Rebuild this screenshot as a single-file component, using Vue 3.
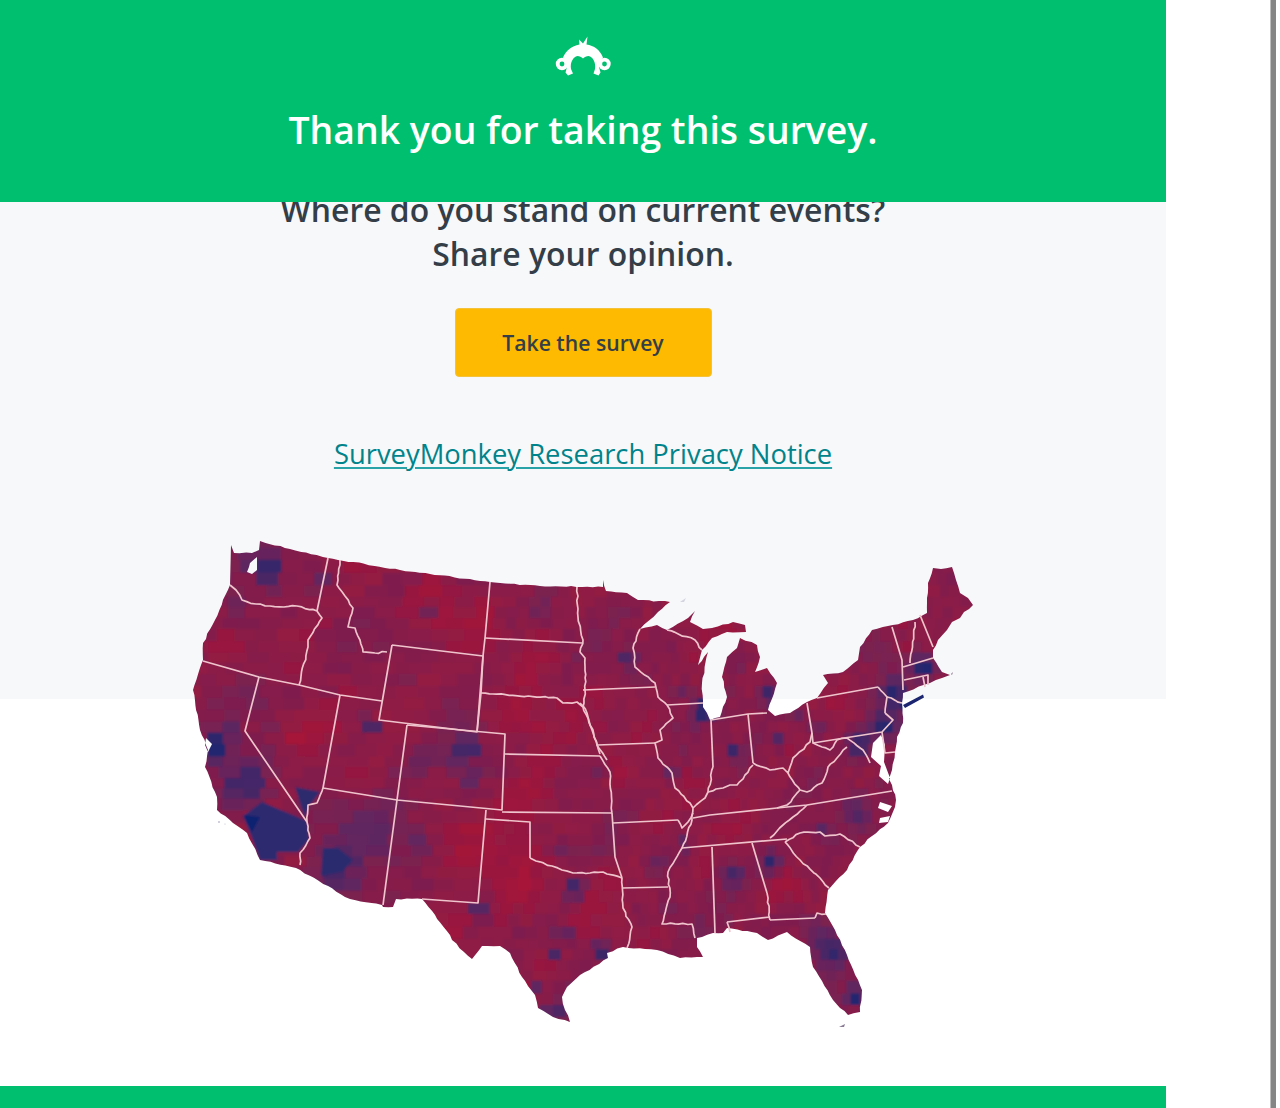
<template>
  <div class="page">
    <div class="column">
      <header class="banner">
        <svg class="logo" viewBox="550 32 66 46" width="66" height="46">
          <path
            d="M579 39.500L583 43.500L587.500 36.500L586.500 44.500C594 45.500 600 50 603 57.500L600 61C600 63 599.500 65 599 67L600.500 72.500L598.500 75.500L593.500 73.500L595 69C596 62.500 593 57 588.500 56C586.500 56 584.500 57 583 58.500C581.500 57 579.500 56 577.500 56C573 57 570 62.500 571 69L573 73.500L568 75.500L565.500 72.500L567 67C566.500 65 566 63 566 61L563 57.500C566 50.500 571.500 46 579.500 44.500Z"
            fill="#fff"
          />
          <circle cx="562" cy="64" r="4.300" fill="none" stroke="#fff" stroke-width="3.800" />
          <circle cx="604.500" cy="64" r="4.300" fill="none" stroke="#fff" stroke-width="3.800" />
        </svg>
        <h1 class="thanks">Thank you for taking this survey.</h1>
      </header>

      <section class="pitch">
        <h2 class="question">Where do you stand on current events?<br />Share your opinion.</h2>
        <button class="cta" type="button">Take the survey</button>
        <a class="privacy" href="#">SurveyMonkey Research Privacy Notice</a>
      </section>

      <section class="map-spacer"></section>
      <footer class="bottom-bar"></footer>

      <!-- map straddles the grey and white sections -->
      <svg class="us-map" viewBox="180 530 810 510" width="810" height="510">
        <defs>
          <clipPath id="usClip">
            <path :d="landPath" clip-rule="evenodd" />
          </clipPath>
          <filter id="soften" x="-2%" y="-2%" width="104%" height="104%">
            <feGaussianBlur stdDeviation="1.1" />
          </filter>
        </defs>
        <g clip-path="url(#usClip)">
          <g filter="url(#soften)">
            <rect
              v-for="c in cells"
              :key="c.id"
              :x="c.x"
              :y="c.y"
              :width="c.w"
              :height="c.h"
              :fill="c.fill"
            />
            <polygon points="262,802 307,821 309,840 298,852 277,852 277,860 260,860 250,833 243,816" fill="#2e2a70" />
            <polygon points="295,787 320,792 308,807 305,818" fill="#2f2a6e" />
            <polygon points="323,848 338,848 353,860 342,872 321,876" fill="#2c2b6e" />
            <polygon points="243,815 260,817 252,832" fill="#0b2070" />
            <polygon points="898,702 928,690 928,700 903,712" fill="#1b2570" />
          </g>
        </g>
        <g class="borders">
          <polyline v-for="(b, i) in borderLines" :key="i" :points="b" />
        </g>
        <g fill="#a9aac0" opacity="0.8">
          <circle cx="219" cy="822" r="0.900" />
          <circle cx="225" cy="824" r="0.600" />
          <path d="M839 1027L845 1024L844 1027Z" fill="#6a5a78" />
          <path d="M680 602L686 598L684 602Z" fill="#c9cbd6" />
          <path d="M951 674L953 672L952 675Z" fill="#6a4a68" />
        </g>
      </svg>
    </div>
    <div class="edge"></div>
  </div>
</template>

<script setup>
// outline traced by hand, coordinates are page pixels
const outline = `231,545 234,553 252,553 259,550 260,541 290,549 328,558 400,570 490,582 540,586 603,587 603,580 606,591 627,593 638,600
670,602 658,612 640,629 657,625 667,630 688,618 695,611 690,622 703,629 712,628 733,622 745,625 746,632 727,632 712,638 702,650
698,665 708,652 702,683 703,707 710,720 720,717 727,697 722,677 727,657 737,648 740,638 757,645 760,657 755,672 767,668 777,683
768,710 775,716 790,713 807,702 817,698 828,683 823,675 843,672 858,660 860,647 872,630 913,620 927,613 928,583 933,568 941,569 952,567
956,580 960,593 968,598 973,605 964,612 960,618 952,622 947,630 938,640 933,650 933,658 942,672 950,675 942,678 930,683 903,693 902,703 903,723 897,737 895,752 892,770
889,779 892,785 896,800 895,807 888,823 872,836 860,847 847,870 828,890 825,913 835,930 847,955 862,990 860,1012 848,1015 833,1000 813,967 810,947 787,932
768,940 757,933 727,928 723,933 713,933 697,938 697,947 703,957 680,958 657,950 623,947 607,953 608,958 580,975 567,987 562,997
565,1010 570,1022 553,1017 538,1008 535,995 522,977 510,953 500,946 482,946 472,959 452,940 450,935 422,899 396,899 393,907 383,907
382,905 350,899 296,868 260,860 247,833 233,823 217,810 217,797 205,767 208,750 200,730 193,690 203,660 203,643 215,620 230,585`

const holes = [
  '250,563 257,557 257,570 252,574 247,572 249,567',
  '881,735 873,743 871,757 881,766 879,776 888,784 890,778 884,762 885,745',
  '880,802 892,806 888,812 878,808',
  '880,818 890,816 888,822 879,823',
  '206,738 212,744 208,752 205,745',
]
const longIsland = '903,705 923,694.500 924,697.500 905,708'

// straight survey lines
const borders = [
  '328,558 317,611',
  '203,661 259,677 299,685 340,695 382,701',
  '259,677 245,731 307,822',
  '392,645 483,656 477,732 379,720 392,645',
  '490,582 485,638 483,656 481,693 477,732',
  '485,638 582,643',
  '505,754 600,756',
  '407,725 505,734 502,810 397,800 407,725',
  '340,695 323,788 397,800',
  '397,800 383,905',
  '486,810 478,903 422,899',
  '502,812 612,813',
  '486,819 530,822 530,858',
  '612,813 615,857 622,878',
  '583,690 655,687',
  '597,745 655,743',
  '667,705 703,703',
  '711,720 713,767',
  '711,720 748,714 767,713',
  '748,714 753,763',
  '817,698 878,687',
  '885,713 893,720 882,732 813,743 812,733 807,703',
  '882,732 885,753 895,752',
  '693,818 710,815 777,808 807,805 892,791',
  '682,848 787,839',
  '752,843 767,893',
  '770,920 815,918',
  '770,917 727,922',
  '712,847 715,933',
  '613,823 678,820',
  '622,888 668,887',
  '892,627 902,660 903,690',
  '920,615 933,647',
  '903,667 933,658',
  '904,680 928,675 928,685',
  '923,677 925,687',
]

// rivers and ridgelines, these get a wobble below
const rivers = [
  '230,585 236,590 242,600 256,604 270,606 284,607 297,606 317,611',
  '317,611 322,618 308,640 308,647 299,685',
  '340,560 337,585 345,596 353,608 348,627 355,628 360,640 363,652 375,653 387,652',
  '577,587 578,617 583,640 580,652 585,658 585,690 583,707 592,730 600,754',
  '481,693 557,698 563,703 577,702 583,707',
  '323,788 317,803 308,805 307,822 310,838 300,853 300,865',
  '530,858 536,861 552,866 562,870 573,873 590,873 603,872 622,878',
  '600,756 610,772 612,813',
  '580,703 587,713 597,745 607,760',
  '640,629 633,648 635,667 655,683 658,697 667,705 673,718 660,730 662,740 655,743 658,758 672,773 675,788 690,803 693,808',
  '667,630 695,640 702,650',
  '713,767 708,792 705,798 693,808 692,820 682,848 668,872 670,897 662,924 692,924 695,938',
  '753,763 770,770 783,768 788,773 793,758 810,742 812,733',
  '708,792 716,789 723,788 730,785 737,785 745,775 753,765',
  '878,687 887,697 885,713',
  '887,697 902,703',
  '813,743 830,750 837,740 847,738 863,750 870,763',
  '847,747 837,758 828,767 822,783 807,792 800,790 788,773',
  '800,790 787,805 777,808',
  '807,805 793,817 783,825 770,838',
  '785,842 800,833 820,832 825,836 840,834 860,847',
  '785,842 800,860 820,878 829,888',
  '767,893 770,920',
  '815,918 817,913 826,914',
  '727,922 730,932',
  '678,820 682,828 688,822 693,813',
  '622,878 623,908 632,927 627,948',
  '915,622 910,663',
]

// pockets: x, y, radius, strength (negative pulls toward red)
const hotspots = [
  [262, 566, 12, 0.8], [240, 612, 15, 0.3], [270, 585, 14, 0.25], [318, 580, 7, 0.4], [215, 748, 14, 0.75],
  [228, 730, 12, 0.3], [245, 785, 24, 0.55], [260, 695, 12, 0.3], [367, 728, 9, 0.7], [465, 750, 15, 0.6],
  [467, 778, 10, 0.4], [360, 840, 48, 0.25], [340, 880, 18, 0.4], [425, 760, 18, 0.2], [420, 840, 10, 0.3],
  [382, 640, 6, 0.35], [430, 610, 7, 0.4], [627, 660, 10, 0.5], [705, 710, 10, 0.75], [768, 695, 10, 0.6],
  [682, 690, 8, 0.3], [600, 775, 8, 0.3], [672, 775, 7, 0.5], [733, 752, 6, 0.5], [777, 742, 6, 0.5],
  [818, 728, 9, 0.4], [885, 725, 14, 0.7], [860, 745, 13, 0.7], [895, 695, 16, 0.6], [925, 667, 12, 0.8],
  [771, 863, 10, 0.65], [683, 845, 5, 0.8], [733, 875, 10, 0.45], [575, 890, 8, 0.9], [600, 950, 7, 0.9],
  [550, 955, 6, 0.8], [563, 935, 9, 0.5], [553, 1012, 7, 0.7], [537, 990, 7, 0.5], [855, 995, 9, 0.85],
  [830, 950, 17, 0.55], [815, 930, 16, 0.3], [853, 810, 14, 0.35], [820, 830, 8, 0.35], [668, 910, 9, 0.25],
  [560, 850, 10, 0.25], [660, 860, 12, 0.2], [880, 650, 20, 0.15], [478, 910, 8, 0.3],
  [740, 660, 9, 0.15], [800, 715, 9, 0.2], [540, 610, 10, 0.2], [505, 620, 8, 0.2],
  [440, 610, 30, -0.2], [300, 735, 25, -0.22], [510, 880, 35, -0.22], [455, 840, 24, -0.15], [525, 720, 30, -0.2],
  [535, 800, 30, -0.12], [450, 925, 22, -0.22], [530, 665, 30, -0.1], [540, 960, 10, -0.15], [355, 780, 22, -0.12],
  [485, 610, 16, -0.1], [630, 790, 30, -0.1], [785, 890, 22, -0.12], [905, 645, 6, -0.2],
]

// little seeded generator so the mosaic stays put between runs
let seed = 7919
const rand = () => {
  seed = (seed * 16807) % 2147483647
  return seed / 2147483647
}

// split long segments and nudge the points so edges stop looking ruler-drawn
function wobble(line, step, amount) {
  const pts = line.trim().split(/\s+/).map((p) => p.split(',').map(Number))
  const out = []
  pts.forEach((p, i) => {
    out.push(p)
    const q = pts[i + 1]
    if (!q) return
    const n = Math.floor(Math.hypot(q[0] - p[0], q[1] - p[1]) / step)
    for (let k = 1; k < n; k++) {
      const dx = (rand() - 0.5) * amount
      const dy = (rand() - 0.5) * amount
      out.push([p[0] + ((q[0] - p[0]) * k) / n + dx, p[1] + ((q[1] - p[1]) * k) / n + dy])
    }
  })
  return out.map((p) => `${p[0].toFixed(1)},${p[1].toFixed(1)}`).join(' ')
}

const toPath = (s) => 'M' + s.trim().split(/\s+/).join('L') + 'Z'
const landPath = [wobble(outline, 5, 1.2), ...holes, longIsland].map(toPath).join(' ')
const borderLines = [...borders, ...rivers.map((r) => wobble(r, 4, 1.6))]

const stops = [
  [0, [172, 18, 52]],
  [0.3, [137, 29, 72]],
  [0.6, [98, 37, 95]],
  [1, [32, 38, 112]],
]

function colorAt(t) {
  const v = Math.min(1, Math.max(0, t))
  let i = 0
  while (i < stops.length - 2 && v > stops[i + 1][0]) i++
  const [a, ca] = stops[i]
  const [b, cb] = stops[i + 1]
  const k = (v - a) / (b - a)
  return `rgb(${ca.map((c, n) => Math.round(c + (cb[n] - c) * k)).join(',')})`
}

function buildCells() {
  const out = []
  let id = 0
  let y = 535
  while (y < 1030) {
    const h = 10 + rand() * 3
    let x = 185
    while (x < 980) {
      const w = x < 480 ? 14 + rand() * 10 : x < 640 ? 10 + rand() * 4 : 8 + rand() * 3
      const cx = x + w / 2
      const cy = y + h / 2
      let t = 0.3 + 0.07 * Math.sin(cx / 37 + 1) * Math.cos(cy / 29) + 0.05 * Math.sin(cx / 13 + cy / 17) + (rand() - 0.5) * 0.14
      for (const [hx, hy, r, amp] of hotspots) {
        const d2 = (cx - hx) ** 2 + (cy - hy) ** 2
        t += amp * Math.exp(-d2 / (r * r))
      }
      out.push({ id: id++, x, y, w: w + 1, h: h + 1, fill: colorAt(t) })
      x += w
    }
    y += h
  }
  return out
}

const cells = buildCells()
</script>

<style>
html,
body {
  margin: 0;
  background: #fff;
}
</style>

<style scoped>
.page {
  position: relative;
  width: 1280px;
  height: 1108px;
  overflow: hidden;
  background: #fff;
  font-family: "Open Sans", "Liberation Sans", sans-serif;
}
.column {
  position: relative;
  width: 1166px;
  height: 1108px;
}
.banner {
  position: relative;
  z-index: 1;
  display: flex;
  flex-direction: column;
  align-items: center;
  height: 202px;
  padding-top: 32px;
  box-sizing: border-box;
  background: #00bf6f;
}
.logo {
  display: block;
}
.thanks {
  margin: 30px 0 0;
  font-size: 37.4px;
  line-height: 44px;
  font-weight: 600;
  color: #fff;
}
.pitch {
  display: flex;
  flex-direction: column;
  align-items: center;
  height: 497px;
  background: #f7f8fa;
}
.question {
  margin: -14px 0 0;
  font-size: 31.900px;
  line-height: 44px;
  font-weight: 600;
  text-align: center;
  color: #333e48;
}
.cta {
  width: 257px;
  height: 69px;
  margin-top: 32px;
  border: 1px solid #f5c23c;
  border-radius: 4px;
  background: #fdba00;
  font-family: inherit;
  font-size: 21.200px;
  font-weight: 600;
  color: #333e48;
}
.privacy {
  margin-top: 59px;
  font-size: 27.400px;
  line-height: 36px;
  color: #00838a;
  text-decoration: underline;
  text-decoration-thickness: 2px;
  text-decoration-color: #2aa3a8;
  text-underline-offset: 3px;
}
.map-spacer {
  height: 387px;
}
.bottom-bar {
  height: 22px;
  background: #00bf6f;
}
.us-map {
  position: absolute;
  left: 180px;
  top: 530px;
  display: block;
}
.borders polyline {
  fill: none;
  stroke: #f0c4cc;
  stroke-width: 1.7;
  stroke-linejoin: round;
}
.edge {
  position: absolute;
  top: 0;
  bottom: 0;
  left: 1270px;
  width: 5px;
  border-left: 1px solid #bdbdbd;
  background: #858585;
}
</style>
